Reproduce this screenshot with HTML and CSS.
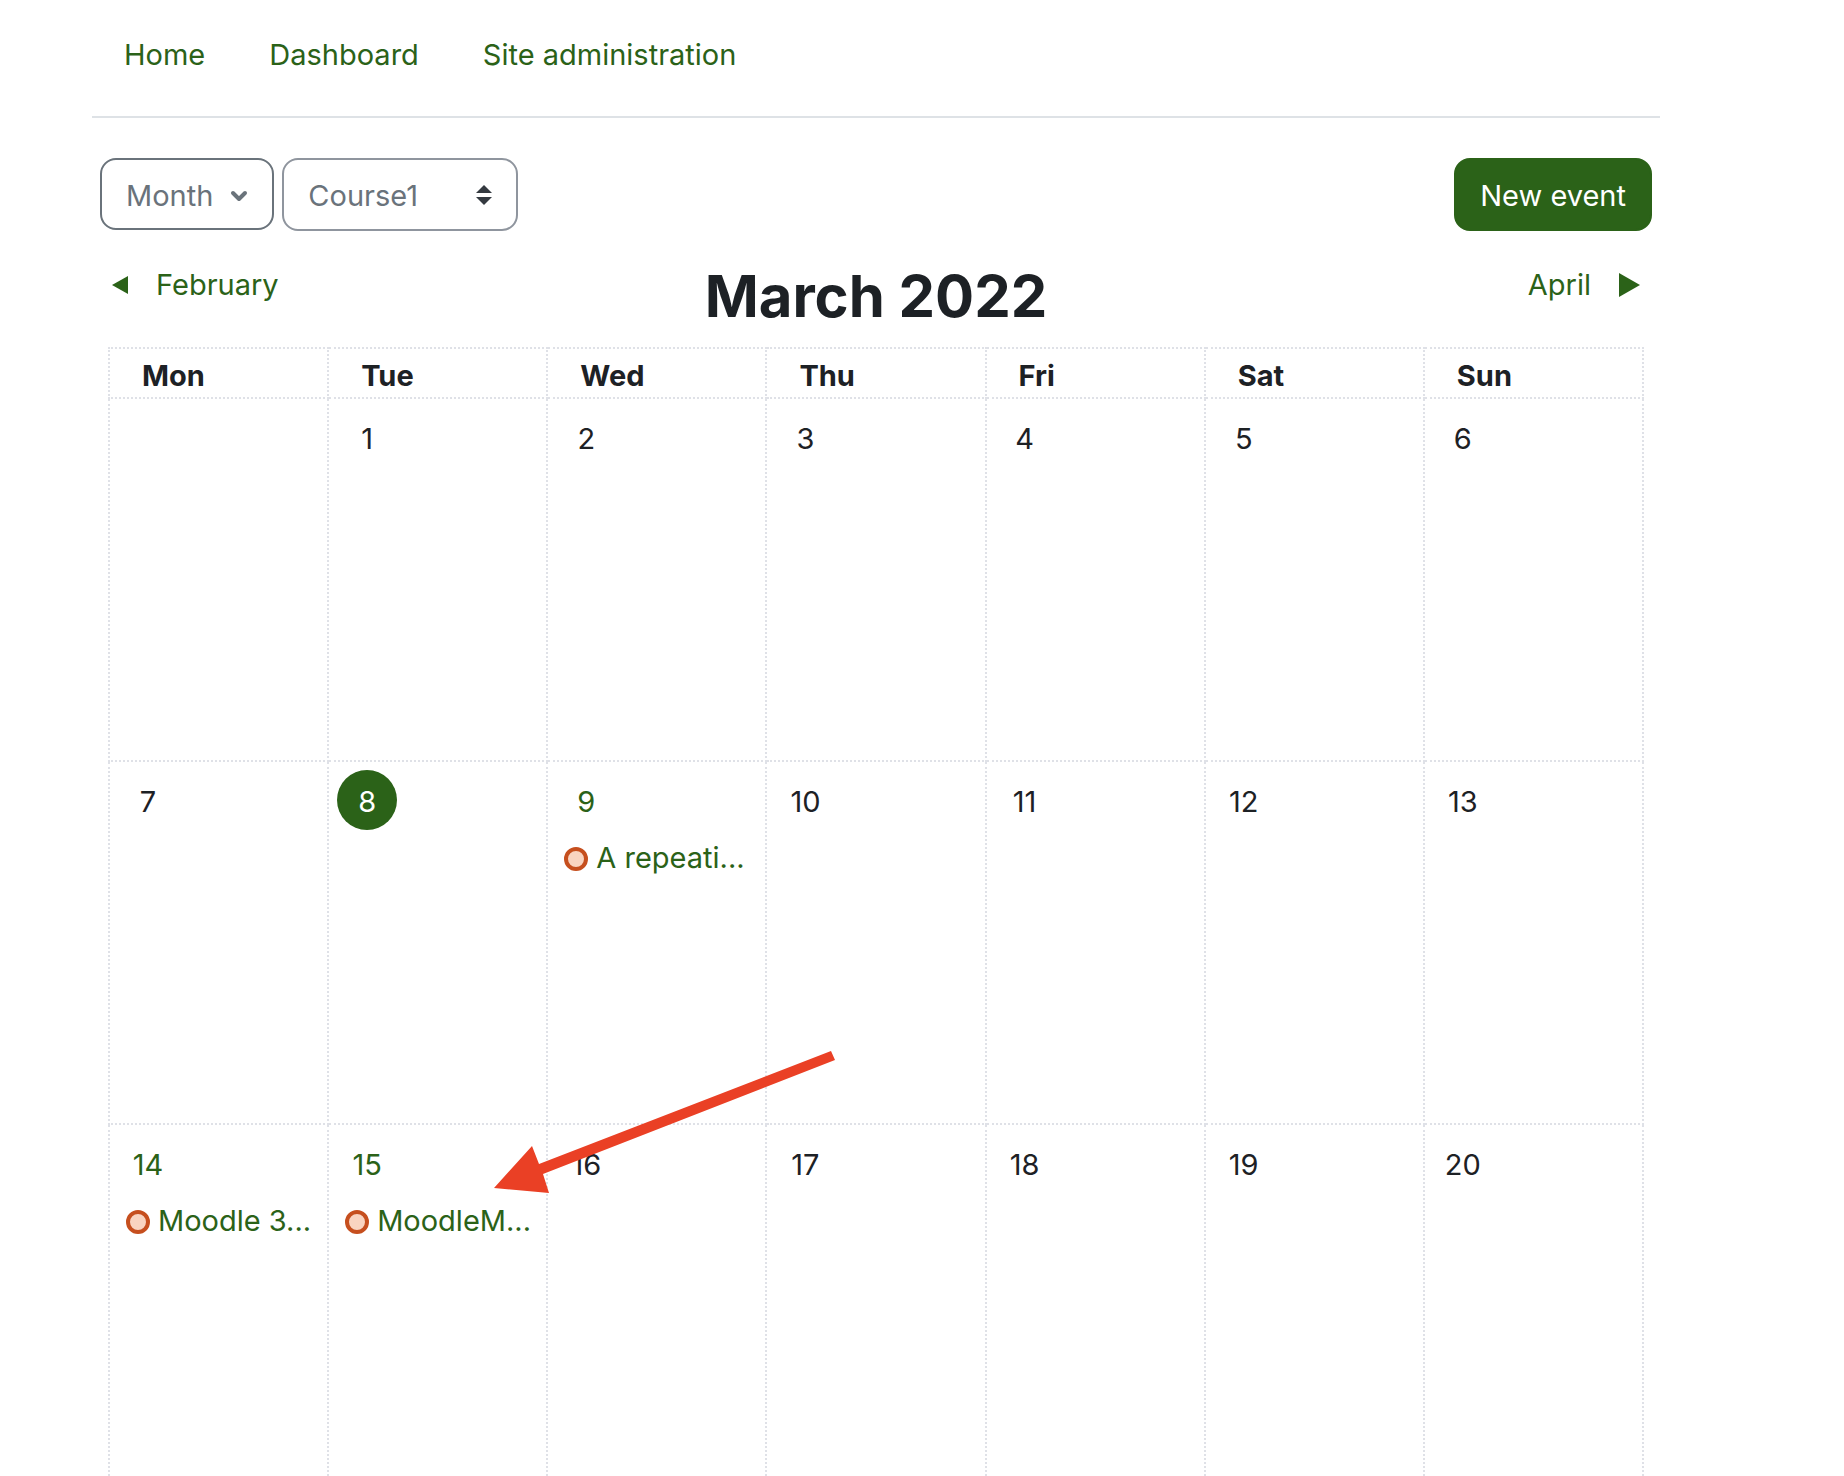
FILE: index.html
```html
<!DOCTYPE html>
<html lang="en">
<head>
  <meta charset="UTF-8">
  <meta name="viewport" content="width=device-width, initial-scale=1.0">
  <title>Calendar: March 2022</title>
  <link rel="stylesheet" href="styles.css">
</head>
<body>
  <header class="site-nav">
    <nav class="nav-links" aria-label="Site">
      <a href="#">Home</a>
      <a href="#">Dashboard</a>
      <a href="#">Site administration</a>
    </nav>
  </header>

  <main>
    <div class="toolbar">
      <button type="button" class="btn btn-outline">
        Month
        <svg class="chevron" viewBox="0 0 18 12" aria-hidden="true"><path d="M3 3l6 6 6-6" /></svg>
      </button>
      <div class="course-select">
        <select aria-label="Course">
          <option>Course1</option>
        </select>
        <svg class="sort" viewBox="0 0 16 20" aria-hidden="true"><path d="M0 8l8-8 8 8zM0 12h16l-8 8z" /></svg>
      </div>
      <button type="button" class="btn btn-primary">New event</button>
    </div>

    <div class="month-nav">
      <a class="prev" href="#">
        <svg class="arrow-left" viewBox="0 0 16 18" aria-hidden="true"><path d="M16 0v18L0 9z" /></svg>
        February
      </a>
      <h2>March 2022</h2>
      <a class="next" href="#">
        April
        <svg class="arrow-right" viewBox="0 0 21 24" aria-hidden="true"><path d="M0 0l21 12L0 24z" /></svg>
      </a>
    </div>

    <div class="calendar">
      <table>
        <thead>
          <tr>
            <th>Mon</th>
            <th>Tue</th>
            <th>Wed</th>
            <th>Thu</th>
            <th>Fri</th>
            <th>Sat</th>
            <th>Sun</th>
          </tr>
        </thead>
        <tbody>
          <tr>
            <td></td>
            <td><span class="day">1</span></td>
            <td><span class="day">2</span></td>
            <td><span class="day">3</span></td>
            <td><span class="day">4</span></td>
            <td><span class="day">5</span></td>
            <td><span class="day">6</span></td>
          </tr>
          <tr>
            <td><span class="day">7</span></td>
            <td><span class="day today">8</span></td>
            <td>
              <a class="day" href="#">9</a>
              <a class="event" href="#"><span class="dot"></span>A repeati...</a>
            </td>
            <td><span class="day">10</span></td>
            <td><span class="day">11</span></td>
            <td><span class="day">12</span></td>
            <td><span class="day">13</span></td>
          </tr>
          <tr>
            <td>
              <a class="day" href="#">14</a>
              <a class="event" href="#"><span class="dot"></span>Moodle 3...</a>
            </td>
            <td>
              <a class="day" href="#">15</a>
              <a class="event" href="#"><span class="dot"></span>MoodleM...</a>
            </td>
            <td><span class="day">16</span></td>
            <td><span class="day">17</span></td>
            <td><span class="day">18</span></td>
            <td><span class="day">19</span></td>
            <td><span class="day">20</span></td>
          </tr>
        </tbody>
      </table>

      <!-- arrow pointing at the event on the 15th -->
      <svg class="pointer" viewBox="0 0 342 142" aria-hidden="true">
        <path d="M0 137L38 95l7 18L337 0l4 9L49 123l6 19z" />
      </svg>
    </div>
  </main>
</body>
</html>
```

FILE: styles.css
```css
* {
  box-sizing: border-box;
}

body {
  margin: 0;
  padding: 0 184px 0 92px;
  height: 100vh;
  overflow: hidden;
  font-family: Inter, "Liberation Sans", sans-serif;
  font-size: 29px;
  line-height: 44px;
  color: #1d2125;
  background-color: #fff;
}

a {
  color: #2b6218;
  text-decoration: none;
}

.site-nav {
  border-bottom: 2px solid #dee2e6;
}

.nav-links {
  display: flex;
  padding: 33px 0 39px;
}

.nav-links a {
  padding: 0 32px;
}

.toolbar {
  display: flex;
  align-items: flex-start;
  gap: 8px;
  padding: 40px 8px 0;
}

.btn {
  display: flex;
  align-items: center;
  padding: 14px 24px 10px;
  border: 2px solid #2b6218;
  border-radius: 16px;
  font: inherit;
  cursor: pointer;
}

.btn-outline {
  gap: 17px;
  border-color: #6a737b;
  color: #6a737b;
  background-color: #fff;
}

.btn-primary {
  margin-left: auto;
  padding-bottom: 11px;
  color: #fff;
  background-color: #2b6218;
}

.chevron {
  width: 18px;
  height: 12px;
  fill: none;
  stroke: #6a737b;
  stroke-width: 4;
  stroke-linecap: round;
  stroke-linejoin: round;
}

.course-select {
  position: relative;
}

.course-select select {
  display: block;
  appearance: none;
  width: 236px;
  height: 73px;
  padding: 3px 24px 0;
  border: 2px solid #8f959e;
  border-radius: 16px;
  font: inherit;
  color: #6a737b;
  background-color: #fff;
}

.sort {
  position: absolute;
  top: 27px;
  right: 26px;
  width: 16px;
  height: 20px;
  fill: #343a40;
  pointer-events: none;
}

.month-nav {
  display: grid;
  grid-template-columns: 1fr auto 1fr;
  align-items: start;
  padding: 29px 20px 15px;
}

.month-nav a {
  display: flex;
  align-items: center;
  padding-top: 3px;
}

.month-nav .prev {
  gap: 28px;
}

.month-nav .next {
  justify-content: flex-end;
  gap: 28px;
}

.arrow-left {
  width: 16px;
  height: 18px;
  fill: #2b6218;
}

.arrow-right {
  width: 21px;
  height: 24px;
  fill: #2b6218;
}

h2 {
  margin: 0;
  font-size: 58px;
  line-height: 72px;
  font-weight: 700;
}

.calendar {
  position: relative;
  margin: 0 16px;
}

table {
  width: 100%;
  table-layout: fixed;
  border-collapse: collapse;
}

th,
td {
  border: 2px dotted #dfe1e7;
  vertical-align: top;
  text-align: left;
}

th {
  height: 50px;
  padding: 5px 0 0 32px;
  line-height: 43px;
  font-weight: 700;
}

td {
  height: 363px;
  padding: 8px;
}

.day {
  display: block;
  width: 60px;
  height: 60px;
  line-height: 63px;
  text-align: center;
  border-radius: 50%;
}

.today {
  color: #fff;
  background-color: #2b6218;
}

.event {
  display: flex;
  align-items: center;
  gap: 8px;
  margin-top: 6px;
  padding-left: 8px;
  white-space: nowrap;
}

.dot {
  width: 24px;
  height: 24px;
  margin-top: 2px;
  border: 4px solid #c64f1e;
  border-radius: 50%;
  background-color: #f9d4c0;
}

.pointer {
  position: absolute;
  top: 704px;
  left: 386px;
  width: 342px;
  height: 142px;
  fill: #ea4025;
}
```
